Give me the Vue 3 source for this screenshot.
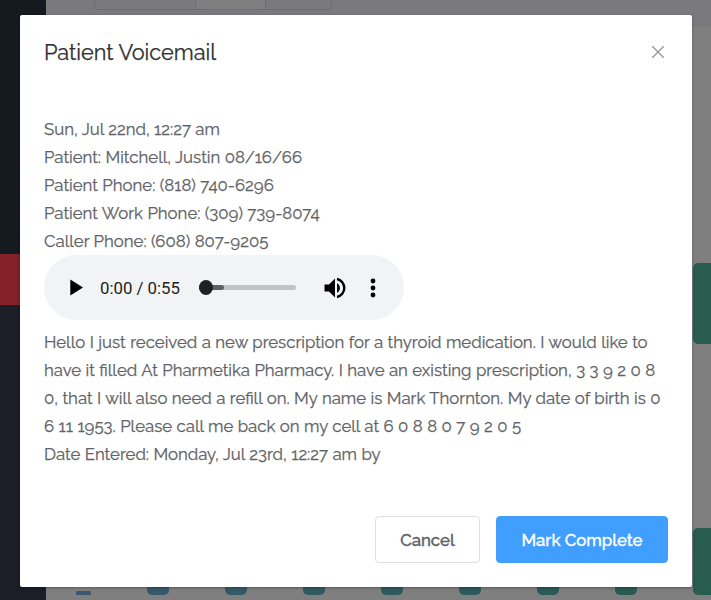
<template>
  <div class="page">
    <aside class="sidebar">
      <div class="sidebar-top"></div>
      <div class="sidebar-active"></div>
    </aside>
    <main class="content">
      <div class="toolbar">
        <div class="button-group">
          <span class="group-item first"></span>
          <span class="group-item second"></span>
          <span class="group-item third"></span>
        </div>
      </div>
      <div class="card"></div>
      <div class="chart">
        <span class="bar-small"></span>
        <span v-for="color in bars" :key="color" class="bar" :style="{ backgroundColor: color }"></span>
        <span class="bar bar-tall"></span>
      </div>
    </main>

    <div v-if="visible" class="dialog">
      <header class="dialog-header">
        <h3>Patient Voicemail</h3>
        <button class="close" aria-label="Close" @click="close">
          <svg width="14" height="14" viewBox="0 0 14 14">
            <path d="M1.3 1.3L12.7 12.7M12.7 1.3L1.3 12.7" fill="none" stroke="#909399" stroke-width="1.3" />
          </svg>
        </button>
      </header>

      <section class="dialog-body">
        <p v-for="line in details" :key="line">{{ line }}</p>

        <div class="player">
          <svg class="play" width="14" height="17" viewBox="0 0 14 17">
            <path d="M0.3 0.5L13 8.5L0.3 16.5Z" />
          </svg>
          <span class="time">0:00 / 0:55</span>
          <div class="track">
            <div class="buffered"></div>
            <div class="thumb"></div>
          </div>
          <svg class="volume" width="22" height="22" viewBox="0 0 22 22">
            <path d="M0.5 7.5H5L11 1.5V20.5L5 14.5H0.5Z" />
            <path d="M13 6.2A5.4 5.4 0 0 1 13 15.8Z" />
            <path d="M13 2A9.2 9.2 0 0 1 13 20" fill="none" stroke="#000" stroke-width="2.4" />
          </svg>
          <svg class="more" width="6" height="20" viewBox="0 0 6 20">
            <circle cx="3" cy="3" r="2.4" />
            <circle cx="3" cy="10" r="2.4" />
            <circle cx="3" cy="17" r="2.4" />
          </svg>
        </div>

        <p>{{ transcript }}</p>
        <p>Date Entered: Monday, Jul 23rd, 12:27 am by</p>
      </section>

      <footer class="dialog-footer">
        <button class="btn" @click="close">Cancel</button>
        <button class="btn btn-primary" @click="close">Mark Complete</button>
      </footer>
    </div>
  </div>
</template>

<script setup>
import { ref } from 'vue';

const visible = ref(true);

const bars = ['#365868', '#335a65', '#305a61', '#2f5b5e', '#2c5b5a', '#2a5b56', '#295b52'];

const details = [
  'Sun, Jul 22nd, 12:27 am',
  'Patient: Mitchell, Justin 08/16/66',
  'Patient Phone: (818) 740-6296',
  'Patient Work Phone: (309) 739-8074',
  'Caller Phone: (608) 807-9205',
];

const transcript =
  'Hello I just received a new prescription for a thyroid medication. I would like to ' +
  'have it filled At Pharmetika Pharmacy. I have an existing prescription, 3 3 9 2 0 8 ' +
  '0, that I will also need a refill on. My name is Mark Thornton. My date of birth is 0 ' +
  '6 11 1953. Please call me back on my cell at 6 0 8 8 0 7 9 2 0 5';

const close = () => {
  visible.value = false;
};
</script>

<style>
body {
  margin: 0;
  overflow: hidden;
}
</style>

<style scoped>
.page {
  position: relative;
  display: flex;
  width: 711px;
  height: 600px;
  overflow: hidden;
  background: #7f7f7f;
  font-family: Raleway, Lato, "Open Sans", sans-serif;
}

.sidebar {
  flex: none;
  width: 46px;
  background: #1b1e26;
}

.sidebar-top {
  height: 254px;
  background: #151920;
}

.sidebar-active {
  height: 51px;
  background: #822128;
}

.content {
  flex: 1;
  display: flex;
  flex-direction: column;
  min-width: 0;
}

.toolbar {
  box-sizing: border-box;
  height: 26px;
  padding-left: 48px;
  background: #7a7a7c;
  border-bottom: 1px solid #747477;
}

.button-group {
  box-sizing: border-box;
  display: flex;
  width: 238px;
  height: 10px;
  border: 1px solid #6d6e71;
  border-top: none;
  border-radius: 0 0 4px 4px;
  overflow: hidden;
}

.group-item.first {
  width: 100px;
}

.group-item.second {
  width: 69px;
  background: #7f7f7f;
  border-left: 1px solid #6d6e71;
}

.group-item.third {
  flex: 1;
  border-left: 1px solid #6d6e71;
}

.card {
  align-self: flex-end;
  width: 18px;
  height: 81px;
  margin-top: 237px;
  background: #285c4f;
  border-radius: 5px 0 0 5px;
}

.chart {
  display: flex;
  align-items: flex-end;
  height: 251px;
  padding-left: 30px;
}

.bar-small {
  flex: none;
  width: 15px;
  height: 4px;
  margin-right: 56px;
  background: #3f566f;
  border-radius: 1px;
}

.bar {
  flex: none;
  width: 22px;
  height: 40px;
  margin-right: 56px;
  border-radius: 5px;
}

.bar-tall {
  height: 67px;
  margin-right: 0;
  background: #285c4f;
}

.dialog {
  position: absolute;
  top: 15px;
  left: 20px;
  box-sizing: border-box;
  width: 672px;
  height: 572px;
  padding: 24px;
  background: #fff;
  border-radius: 2px;
  box-shadow: 0 1px 3px rgba(0, 0, 0, 0.3);
  color: #606266;
}

.dialog-header {
  display: flex;
  justify-content: space-between;
  height: 28px;
}

.dialog-header h3 {
  margin: 0;
  color: #303133;
  font-size: 21.7px;
  font-weight: 400;
  line-height: 28px;
  -webkit-text-stroke: 0.25px #303133;
}

.close {
  display: flex;
  align-items: center;
  margin: 0;
  padding: 0 3px 2px 0;
  border: none;
  background: none;
  cursor: pointer;
}

.dialog-body {
  padding-top: 48px;
  font-size: 16.8px;
  word-spacing: 0.17px;
  -webkit-text-stroke: 0.25px #606266;
}

.dialog-body p {
  margin: 0;
  line-height: 28px;
}

.player {
  box-sizing: border-box;
  display: flex;
  align-items: center;
  width: 360px;
  height: 65px;
  margin: 0 0 8px;
  padding-left: 26px;
  background: #f1f3f4;
  border-radius: 33px;
  word-spacing: 0;
  -webkit-text-stroke: 0;
}

.time {
  width: 80px;
  margin-left: 16px;
  color: #222;
  font-family: Roboto, sans-serif;
  font-size: 16.8px;
  white-space: nowrap;
}

.track {
  position: relative;
  width: 97px;
  height: 5px;
  margin-left: 19px;
  background: #c1c3c4;
  border-radius: 3px;
}

.buffered {
  width: 25px;
  height: 5px;
  background: #5e5f60;
  border-radius: 3px;
}

.thumb {
  position: absolute;
  top: -5px;
  left: 0;
  width: 14px;
  height: 15px;
  background: #1f2020;
  border-radius: 50%;
}

.volume {
  margin-left: 28px;
}

.more {
  margin-left: 24px;
}

.dialog-footer {
  display: flex;
  justify-content: flex-end;
  gap: 16px;
  margin-top: 48px;
}

.btn {
  box-sizing: border-box;
  width: 105px;
  height: 47px;
  padding: 0;
  background: #fff;
  border: 1px solid #dcdfe6;
  border-radius: 4px;
  color: #606266;
  font-family: inherit;
  font-size: 16.8px;
  font-weight: 500;
  -webkit-text-stroke: 0.35px currentColor;
  cursor: pointer;
}

.btn-primary {
  width: 172px;
  background: #409eff;
  border-color: #409eff;
  color: #fff;
}
</style>
